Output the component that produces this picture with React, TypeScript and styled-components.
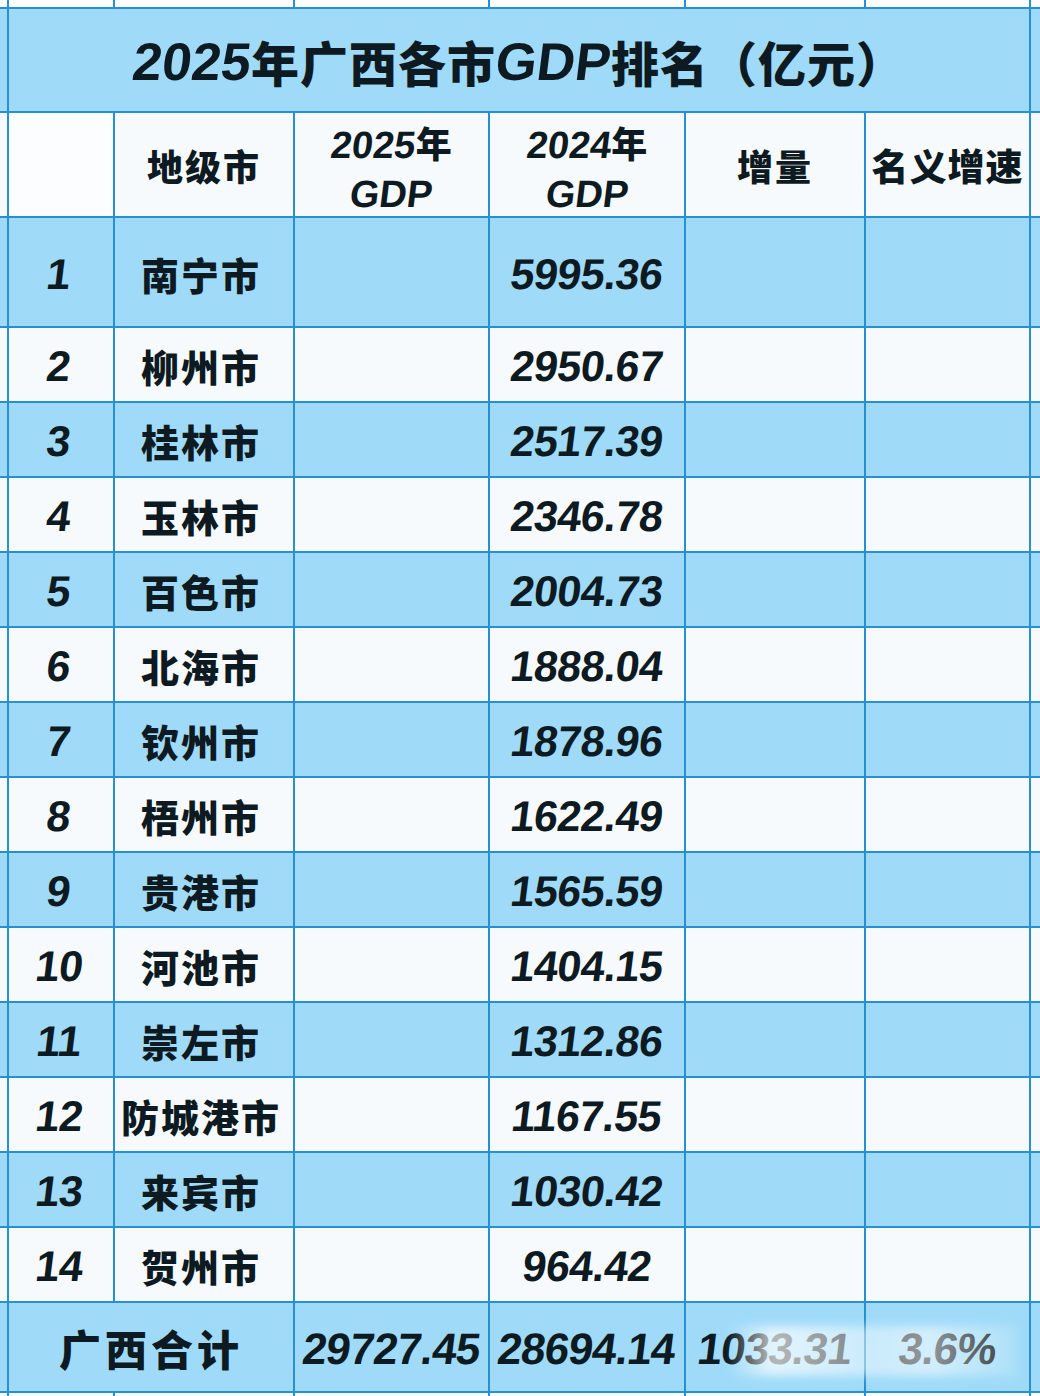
import React from 'react';
import styled, { createGlobalStyle } from 'styled-components';

const GlobalStyle = createGlobalStyle`
  html, body {
    margin: 0;
    padding: 0;
    background: #ffffff;
  }
`;

interface CityRow {
  rank: number;
  name: string;
  gdp2024: string;
}

const rows: CityRow[] = [
  { rank: 1, name: '南宁市', gdp2024: '5995.36' },
  { rank: 2, name: '柳州市', gdp2024: '2950.67' },
  { rank: 3, name: '桂林市', gdp2024: '2517.39' },
  { rank: 4, name: '玉林市', gdp2024: '2346.78' },
  { rank: 5, name: '百色市', gdp2024: '2004.73' },
  { rank: 6, name: '北海市', gdp2024: '1888.04' },
  { rank: 7, name: '钦州市', gdp2024: '1878.96' },
  { rank: 8, name: '梧州市', gdp2024: '1622.49' },
  { rank: 9, name: '贵港市', gdp2024: '1565.59' },
  { rank: 10, name: '河池市', gdp2024: '1404.15' },
  { rank: 11, name: '崇左市', gdp2024: '1312.86' },
  { rank: 12, name: '防城港市', gdp2024: '1167.55' },
  { rank: 13, name: '来宾市', gdp2024: '1030.42' },
  { rank: 14, name: '贺州市', gdp2024: '964.42' },
];

type Tone = 'blue' | 'white' | 'paper';

const tones: Record<Tone, string> = {
  blue: '#9fdbf8',
  white: '#f6fafd',
  paper: '#fbfdfe',
};

const App: React.FC = () => {
  return (
    <>
      <GlobalStyle />
      <Sheet>
        {/* cropped row above the table */}
        {Array.from({ length: 8 }).map((_, i) => (
          <Cell key={'top' + i} $tone="paper" />
        ))}

        <Cell $tone="blue" />
        <TitleCell $tone="blue">
          <Lat>2025</Lat>年广西各市<Lat>GDP</Lat>排名（亿元）
        </TitleCell>
        <Cell $tone="blue" />

        <Cell $tone="white" />
        <Cell $tone="paper" />
        <HeadCell $tone="white">地级市</HeadCell>
        <HeadCell $tone="white">
          <Stack>
            <span><HeadNum>2025</HeadNum>年</span>
            <HeadNum>GDP</HeadNum>
          </Stack>
        </HeadCell>
        <HeadCell $tone="white">
          <Stack>
            <span><HeadNum>2024</HeadNum>年</span>
            <HeadNum>GDP</HeadNum>
          </Stack>
        </HeadCell>
        <HeadCell $tone="white">增量</HeadCell>
        <HeadCell $tone="white" $tight>名义增速</HeadCell>
        <Cell $tone="white" />

        {rows.map((r) => {
          const tone: Tone = r.rank % 2 === 1 ? 'blue' : 'white';
          return (
            <React.Fragment key={r.rank}>
              <Cell $tone={tone} />
              <RankCell $tone={tone}><Num>{r.rank}</Num></RankCell>
              <CityCell $tone={tone}>{r.name}</CityCell>
              <Cell $tone={tone} />
              <Cell $tone={tone}><Num>{r.gdp2024}</Num></Cell>
              <Cell $tone={tone} />
              <Cell $tone={tone} />
              <Cell $tone={tone} />
            </React.Fragment>
          );
        })}

        <Cell $tone="blue" />
        <TotalLabel $tone="blue">广西合计</TotalLabel>
        <Cell $tone="blue"><TotalNum>29727.45</TotalNum></Cell>
        <Cell $tone="blue"><TotalNum>28694.14</TotalNum></Cell>
        <Cell $tone="blue"><TotalNum>1033.31</TotalNum></Cell>
        <Cell $tone="blue"><TotalNum>3.6%</TotalNum></Cell>
        <Cell $tone="blue" />

        {Array.from({ length: 8 }).map((_, i) => (
          <Cell key={'bottom' + i} $tone="paper" />
        ))}

        <Smudge />
      </Sheet>
    </>
  );
};

export default App;

const Sheet = styled.div`
  position: relative;
  width: 1040px;
  height: 1396px;
  display: grid;
  grid-template-columns: 7px 104px 178px 193px 194px 178px 163px 9px;
  grid-template-rows: 7px 102px 103px 108px repeat(13, 73px) 88px 3px;
  gap: 2px;
  background: #2690d0;
  overflow: hidden;
  color: #0d1a21;
  font-family: 'Noto Sans CJK SC', 'Liberation Sans', sans-serif;
`;

const Cell = styled.div<{ $tone: Tone }>`
  background: ${(p) => tones[p.$tone]};
  display: flex;
  align-items: center;
  justify-content: center;
  min-width: 0;
  overflow: hidden;
  white-space: nowrap;
`;

const TitleCell = styled(Cell)`
  grid-column: 2 / 8;
  font-size: 48px;
  font-weight: 900;
  letter-spacing: 1px;
  padding-top: 2px;
`;

const Skewed = styled.span`
  display: inline-block;
  font-family: 'Liberation Sans', sans-serif;
  font-style: normal;
  font-weight: 700;
  transform: skewX(-7deg);
`;

const Lat = styled(Skewed)`
  font-size: 53px;
  letter-spacing: 0;
`;

const HeadCell = styled(Cell)<{ $tight?: boolean }>`
  font-size: ${(p) => (p.$tight ? '37px' : '36px')};
  font-weight: 900;
  letter-spacing: ${(p) => (p.$tight ? '1px' : '2px')};
`;

const Stack = styled.div`
  display: flex;
  flex-direction: column;
  align-items: center;
  line-height: 49px;
  letter-spacing: 0;
  margin-top: 8px;
`;

const HeadNum = styled(Skewed)`
  font-size: 38px;
`;

const RankCell = styled(Cell)`
  padding-right: 4px;
`;

const CityCell = styled(Cell)`
  font-size: 38px;
  font-weight: 900;
  letter-spacing: 2px;
  padding-right: 6px;
  padding-top: 2px;
`;

const Num = styled(Skewed)`
  font-size: 43px;
  letter-spacing: -0.5px;
  padding-top: 4px;
`;

const TotalNum = styled(Num)`
  font-size: 44px;
  letter-spacing: -0.8px;
`;

const TotalLabel = styled(Cell)`
  grid-column: 2 / 4;
  font-size: 42px;
  font-weight: 900;
  letter-spacing: 4px;
`;

const Smudge = styled.div`
  position: absolute;
  left: 728px;
  top: 1326px;
  width: 288px;
  height: 50px;
  background: linear-gradient(
    90deg,
    rgba(255, 255, 255, 0) 0%,
    rgba(255, 255, 255, 0.7) 15%,
    rgba(255, 255, 255, 0.45) 50%,
    rgba(255, 255, 255, 0.55) 70%,
    rgba(255, 255, 255, 0.15) 100%
  );
  filter: blur(5px);
  pointer-events: none;
`;
